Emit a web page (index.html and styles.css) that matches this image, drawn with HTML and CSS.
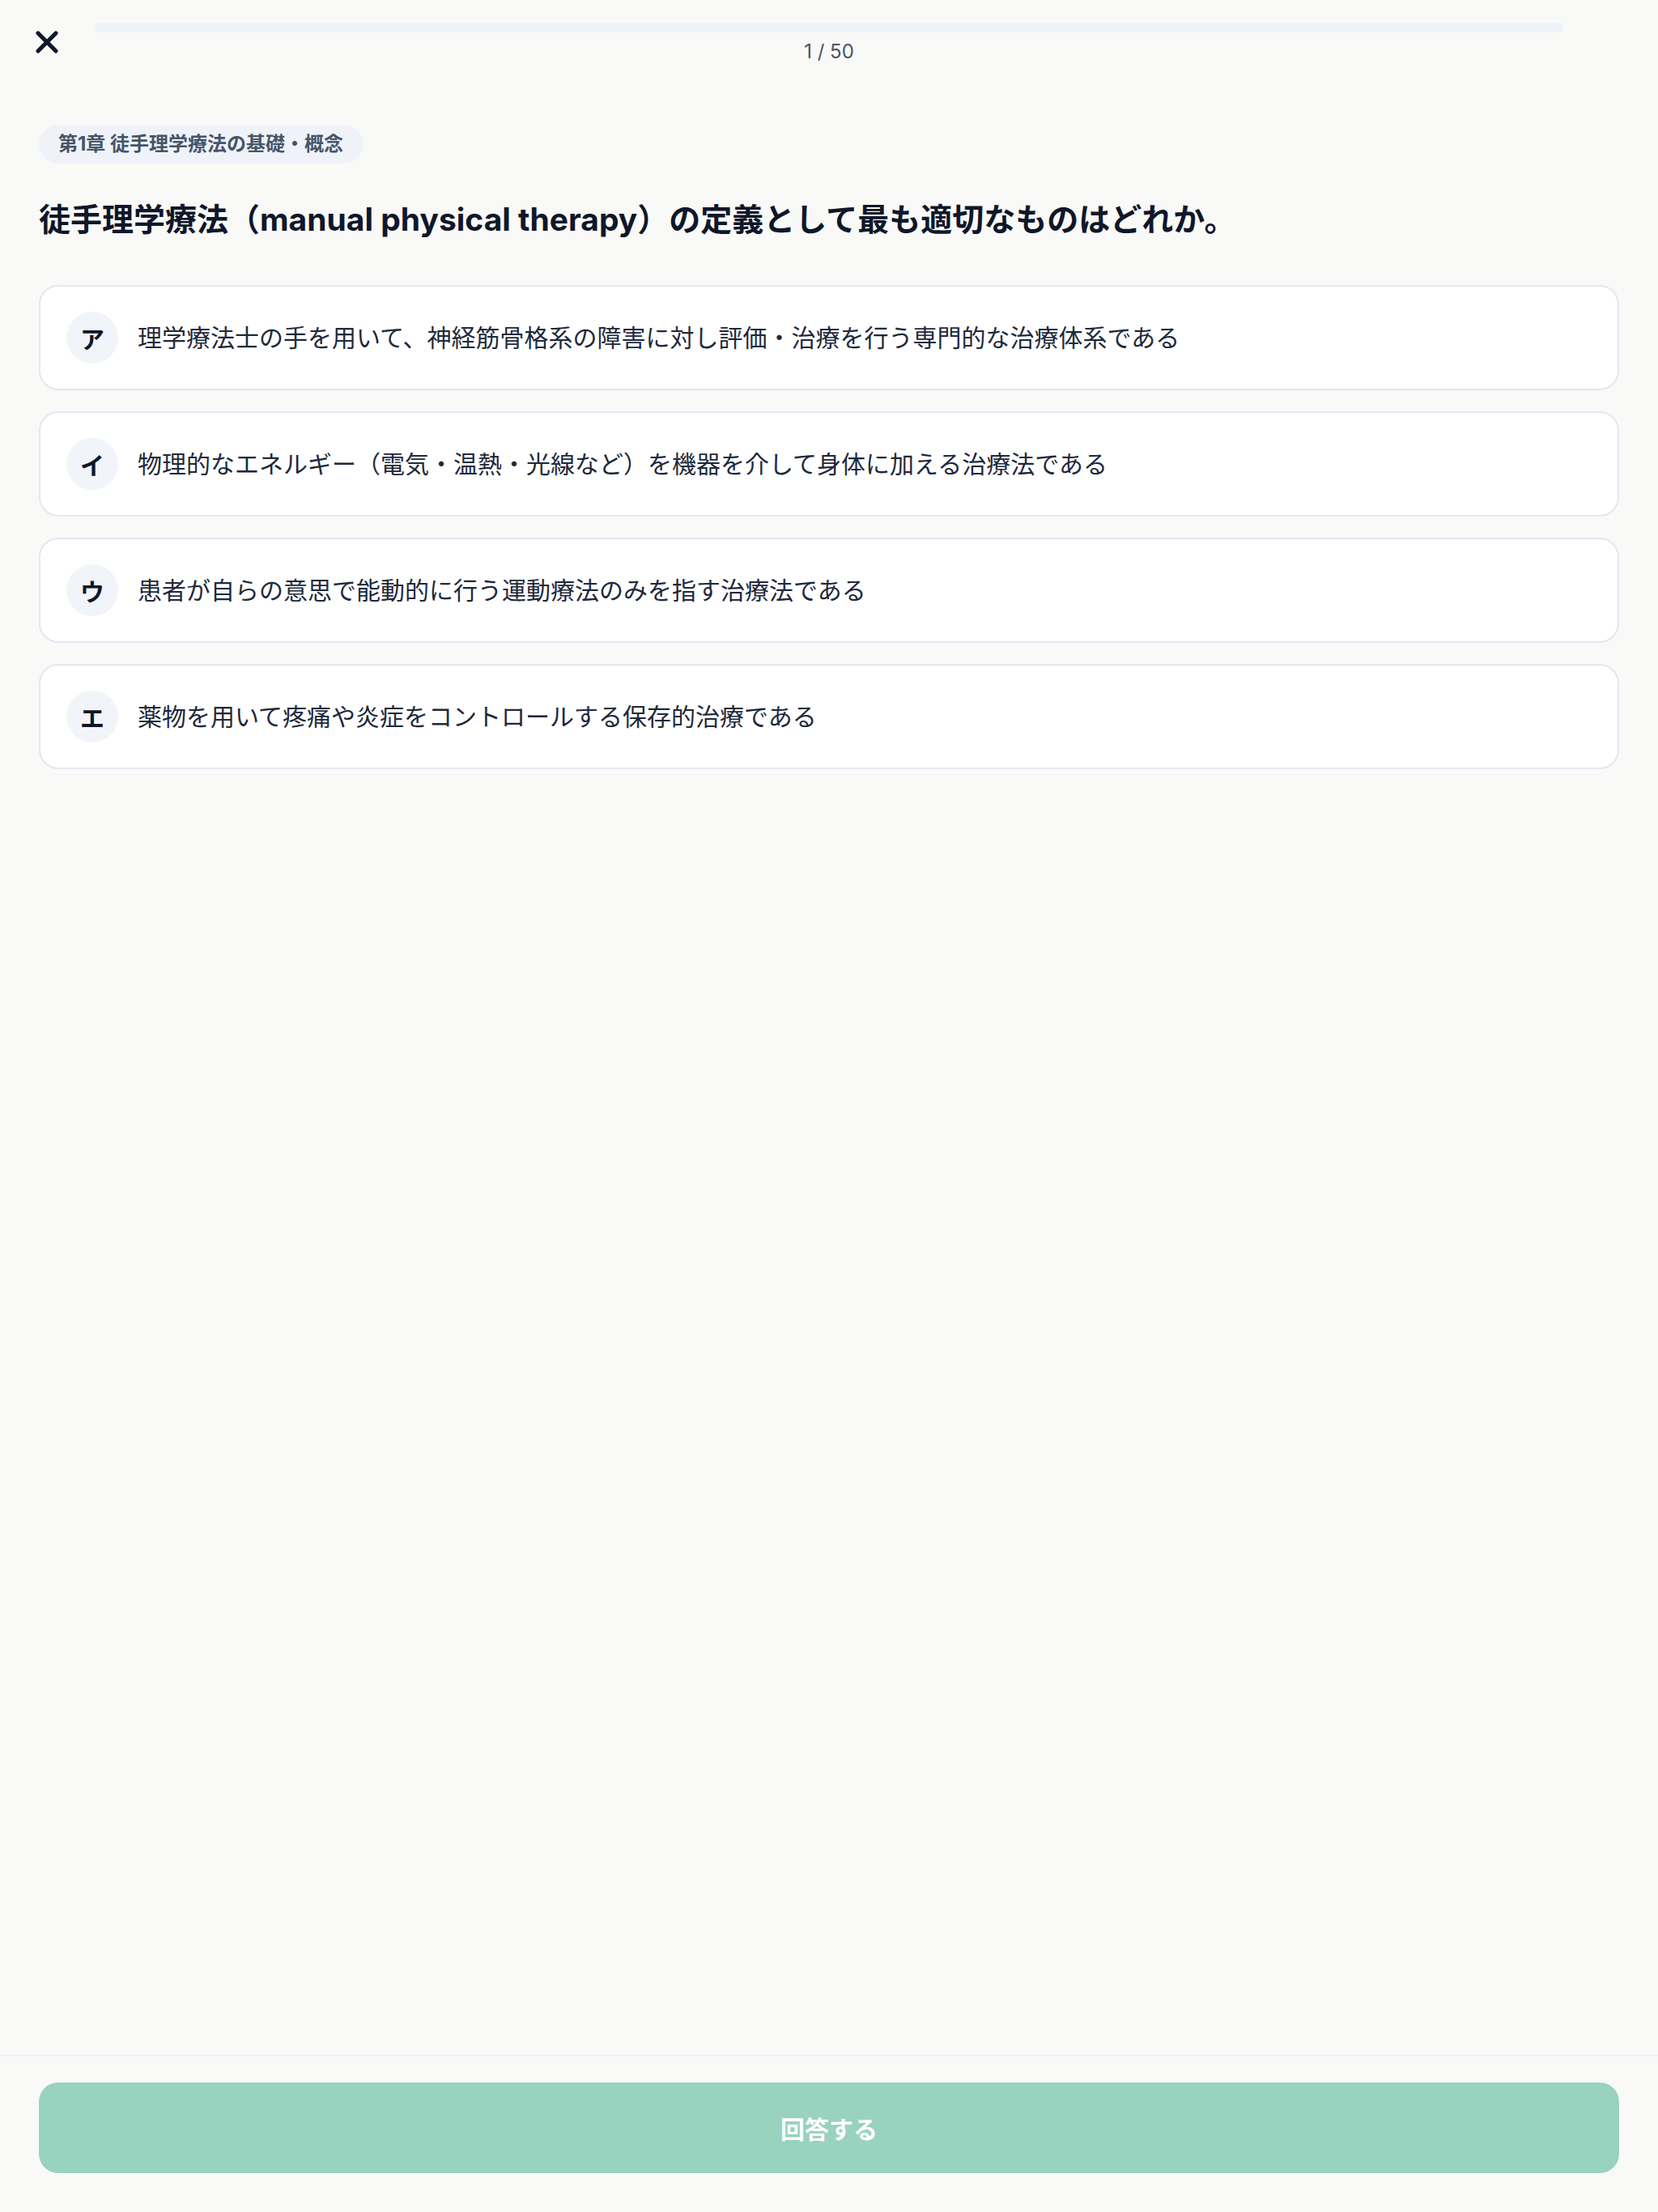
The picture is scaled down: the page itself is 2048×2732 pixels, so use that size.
FILE: index.html
```html
<!DOCTYPE html>
<html lang="ja">
<head>
<meta charset="utf-8">
<title>Quiz</title>
<link rel="stylesheet" href="styles.css">
</head>
<body>
<div class="app">
  <header class="topbar">
    <button class="close-btn" aria-label="閉じる">
      <svg viewBox="0 0 24 24" width="48" height="48" fill="none" stroke="#0f172a" stroke-width="2.6" stroke-linecap="round" stroke-linejoin="round"><path d="M17.5 6.5 6.5 17.5"/><path d="m6.5 6.5 11 11"/></svg>
    </button>
    <div class="progress">
      <div class="progress-track"><div class="progress-fill" style="width:0%"></div></div>
      <div class="progress-count">1 / 50</div>
    </div>
    <div class="spacer"></div>
  </header>

  <main class="content">
    <div class="chapter">第1章 徒手理学療法の基礎・概念</div>
    <h1 class="question">徒手理学療法（manual physical therapy）の定義として最も適切なものはどれか。</h1>
    <ul class="options">
      <li class="option"><span class="label">ア</span><span class="text">理学療法士の手を用いて、神経筋骨格系の障害に対し評価・治療を行う専門的な治療体系である</span></li>
      <li class="option"><span class="label">イ</span><span class="text">物理的なエネルギー（電気・温熱・光線など）を機器を介して身体に加える治療法である</span></li>
      <li class="option"><span class="label">ウ</span><span class="text">患者が自らの意思で能動的に行う運動療法のみを指す治療法である</span></li>
      <li class="option"><span class="label">エ</span><span class="text">薬物を用いて疼痛や炎症をコントロールする保存的治療である</span></li>
    </ul>
  </main>

  <footer class="footer">
    <button class="submit">回答する</button>
  </footer>
</div>
</body>
</html>
```

FILE: styles.css
```css
* { box-sizing: border-box; }
html, body { margin: 0; padding: 0; }
body {
  background: #f9f9f7;
  font-family: "Inter", "Noto Sans CJK JP", sans-serif;
  color: #0f172a;
}
.app {
  min-height: 100vh;
  display: flex;
  flex-direction: column;
}
.topbar {
  display: flex;
  align-items: flex-start;
  gap: 34px;
  padding: 28px 34px 0;
}
.close-btn {
  width: 48px;
  height: 48px;
  padding: 0;
  border: 0;
  background: transparent;
  display: flex;
  align-items: center;
  justify-content: center;
  flex-shrink: 0;
}
.spacer { width: 48px; flex-shrink: 0; }
.progress {
  flex: 1;
  display: flex;
  flex-direction: column;
  align-items: center;
  gap: 8px;
}
.progress-track {
  width: 100%;
  height: 12px;
  border-radius: 6px;
  background: #eff3f9;
  overflow: hidden;
}
.progress-fill { height: 100%; background: #99d2bf; }
.progress-count {
  font-size: 24px;
  line-height: 32px;
  color: #475569;
}
.content {
  flex: 1;
  padding: 74px 48px 0;
}
.chapter {
  display: inline-block;
  padding: 8px 24px;
  border-radius: 24px;
  background: #eff3f9;
  color: #475569;
  font-size: 24px;
  line-height: 32px;
  font-weight: 700;
}
.question {
  margin: 42px 0 54px;
  font-size: 39px;
  line-height: 54px;
  font-weight: 700;
  color: #0f172a;
}
.options {
  list-style: none;
  margin: 0;
  padding: 0;
  display: flex;
  flex-direction: column;
  gap: 26px;
}
.option {
  display: flex;
  align-items: center;
  gap: 24px;
  padding: 31px 32px;
  background: #ffffff;
  border: 2px solid #e2e8f0;
  border-radius: 24px;
}
.label {
  width: 64px;
  height: 64px;
  flex-shrink: 0;
  border-radius: 50%;
  background: #f1f5f9;
  display: flex;
  align-items: center;
  justify-content: center;
  font-size: 30px;
  font-weight: 700;
  color: #0f172a;
}
.text {
  font-size: 30px;
  line-height: 44px;
  color: #1e293b;
}
.footer {
  border-top: 2px solid #eef2f6;
  padding: 32px 48px 48px;
}
.submit {
  display: block;
  width: 100%;
  height: 112px;
  border: 0;
  border-radius: 24px;
  background: #99d2bf;
  color: #ffffff;
  font-family: "Inter", "Noto Sans CJK JP", sans-serif;
  font-size: 30px;
  font-weight: 700;
}
```
